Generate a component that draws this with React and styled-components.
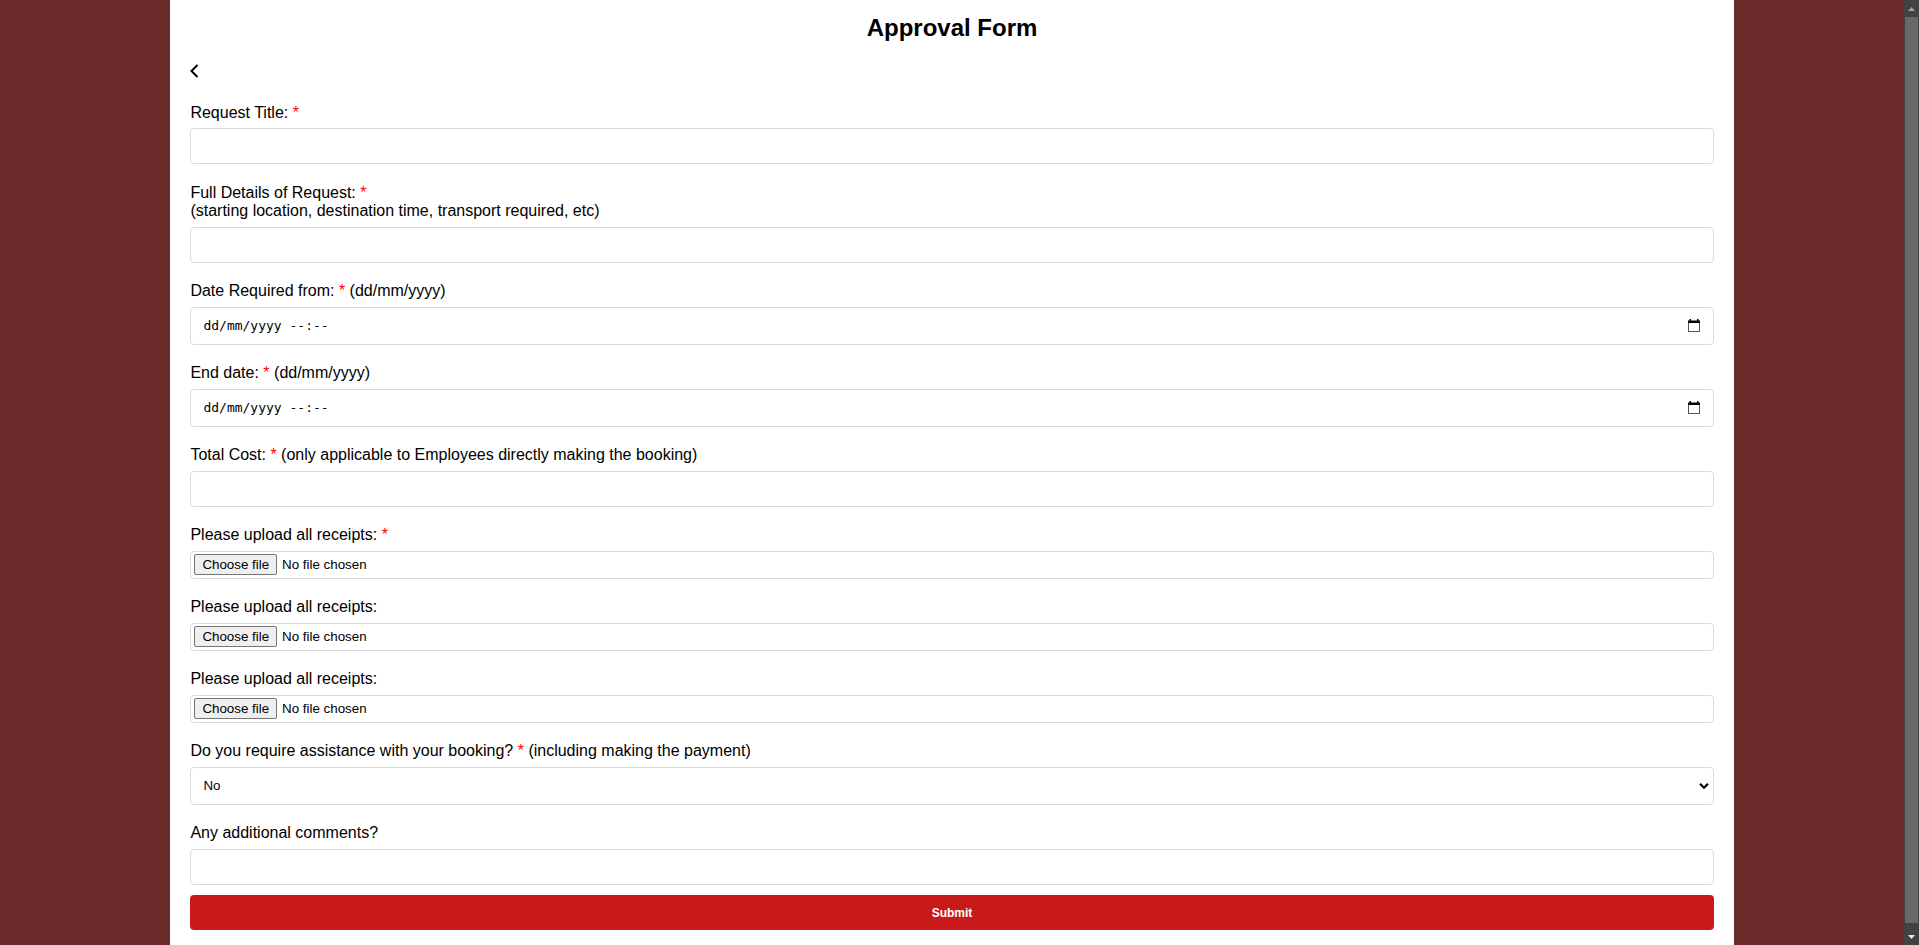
import React from 'react';
import styled, { createGlobalStyle } from 'styled-components';

const GlobalStyle = createGlobalStyle`
  html { background: #6b2b2d; }
  body {
    margin: 0;
    background: #6b2b2d;
    font-family: "Liberation Sans", Arial, sans-serif;
  }
`;

const Page = styled.div`
  display: flex;
  align-items: flex-start;
  min-height: 100vh;
`;

const Viewport = styled.div`
  flex: 1;
  min-width: 0;
`;

const Scrollbar = styled.div`
  position: sticky;
  top: 0;
  flex: 0 0 15px;
  height: 100vh;
  display: flex;
  flex-direction: column;
  background: #424242;
`;

const ScrollArrow = styled.div`
  flex: 0 0 17px;
  display: flex;
  align-items: center;
  justify-content: center;
`;

const ScrollThumb = styled.div`
  flex: 1;
  margin: 0 1px 5px;
  background: #686868;
`;

const Panel = styled.main`
  box-sizing: content-box;
  width: 80%;
  margin: 0 auto;
  padding: 0 20px 20px;
  background: #fff;
  color: #000;
`;

const Title = styled.h2`
  margin: 0;
  padding-top: 14px;
  font-size: 24px;
  line-height: 28px;
  font-weight: bold;
  text-align: center;
`;

const BackButton = styled.button`
  display: block;
  margin: 21px 0 0;
  padding: 0;
  border: 0;
  background: none;
  width: 10px;
  height: 16px;
  cursor: pointer;
  svg { display: block; }
`;

const Form = styled.form`
  margin-top: 25px;
`;

const Field = styled.div`
  margin-bottom: ${p => (p.$last ? '10.6px' : '19.6px')};
`;

const Label = styled.label`
  display: block;
  font-size: 16px;
  line-height: 18.4px;
  margin-bottom: 6px;
`;

const Required = styled.span`
  color: #ff0000;
`;

const boxBase = `
  box-sizing: border-box;
  width: 100%;
  border: 1px solid #dadada;
  border-radius: 4px;
  background: #fff;
`;

const TextInput = styled.input`
  ${boxBase}
  display: block;
  height: 36px;
  padding: 0 12px;
  font: 16px "Liberation Sans", Arial, sans-serif;
  color: #000;
  outline: none;
`;

const DateBox = styled.div`
  ${boxBase}
  display: flex;
  align-items: center;
  justify-content: space-between;
  height: 38px;
  padding: 0 13px 0 12px;
`;

const DateText = styled.span`
  font: 13px "DejaVu Sans Mono", "Liberation Mono", monospace;
  color: #000;
`;

const FileBox = styled.div`
  ${boxBase}
  display: flex;
  align-items: center;
  gap: 5px;
  height: 28px;
  padding: 0 3px;
  font: 13.33px "Liberation Sans", Arial, sans-serif;
`;

const FileButton = styled.button`
  box-sizing: border-box;
  height: 21px;
  padding: 0 7px;
  border: 1px solid #767676;
  border-radius: 2px;
  background: #efefef;
  color: #000;
  font: 13.33px "Liberation Sans", Arial, sans-serif;
`;

const FileText = styled.span`
  color: #000;
`;

const SelectWrap = styled.div`
  position: relative;
`;

const Select = styled.select`
  ${boxBase}
  display: block;
  appearance: none;
  height: 38px;
  padding: 0 20px 0 12px;
  font: 13.33px "Liberation Sans", Arial, sans-serif;
  color: #000;
  outline: none;
`;

const SelectArrow = styled.svg`
  position: absolute;
  right: 5px;
  top: 50%;
  transform: translateY(-50%);
  pointer-events: none;
`;

const SubmitButton = styled.button`
  display: block;
  box-sizing: border-box;
  width: 100%;
  height: 35px;
  border: 0;
  border-radius: 4px;
  background: #c81a1a;
  color: #fff;
  font: bold 12px "Liberation Sans", Arial, sans-serif;
  cursor: pointer;
`;

const CalendarIcon = () => (
  <svg width="12" height="13" viewBox="0 0 12 13">
    <rect x="0.5" y="3.5" width="11" height="9" fill="none" stroke="#555" strokeWidth="1" />
    <rect x="0" y="1.5" width="12" height="2.5" fill="#000" />
    <rect x="1.5" y="0" width="1.5" height="2" fill="#000" />
    <rect x="9" y="0" width="1.5" height="2" fill="#000" />
  </svg>
);

const DateField = ({ label, hint }) => (
  <Field>
    <Label>
      {label} <Required>*</Required> {hint}
    </Label>
    <DateBox>
      <DateText>dd/mm/yyyy --:--</DateText>
      <CalendarIcon />
    </DateBox>
  </Field>
);

const FileField = ({ required }) => (
  <Field>
    <Label>
      Please upload all receipts: {required && <Required>*</Required>}
    </Label>
    <FileBox>
      <FileButton type="button">Choose file</FileButton>
      <FileText>No file chosen</FileText>
    </FileBox>
  </Field>
);

export default function App() {
  return (
    <>
      <GlobalStyle />
      <Page>
        <Viewport>
          <Panel>
            <Title>Approval Form</Title>
            <BackButton type="button" aria-label="Back">
              <svg width="10" height="16" viewBox="0 0 10 16">
                <path d="M7.5 2 L1.5 8 L7.5 14" fill="none" stroke="#000" strokeWidth="2" />
              </svg>
            </BackButton>
            <Form onSubmit={e => e.preventDefault()}>
              <Field>
                <Label>
                  Request Title: <Required>*</Required>
                </Label>
                <TextInput type="text" />
              </Field>
              <Field>
                <Label>
                  Full Details of Request: <Required>*</Required>
                  <br />
                  (starting location, destination time, transport required, etc)
                </Label>
                <TextInput type="text" />
              </Field>
              <DateField label="Date Required from:" hint="(dd/mm/yyyy)" />
              <DateField label="End date:" hint="(dd/mm/yyyy)" />
              <Field>
                <Label>
                  Total Cost: <Required>*</Required> (only applicable to Employees directly making the booking)
                </Label>
                <TextInput type="text" />
              </Field>
              <FileField required />
              <FileField />
              <FileField />
              <Field>
                <Label>
                  Do you require assistance with your booking? <Required>*</Required> (including making the payment)
                </Label>
                <SelectWrap>
                  <Select defaultValue="No">
                    <option value="No">No</option>
                    <option value="Yes">Yes</option>
                  </Select>
                  <SelectArrow width="10" height="7" viewBox="0 0 10 7">
                    <path d="M1 1.2 L5 5.2 L9 1.2" fill="none" stroke="#000" strokeWidth="2.2" />
                  </SelectArrow>
                </SelectWrap>
              </Field>
              <Field $last>
                <Label>Any additional comments?</Label>
                <TextInput type="text" />
              </Field>
              <SubmitButton type="submit">Submit</SubmitButton>
            </Form>
          </Panel>
        </Viewport>
        <Scrollbar aria-hidden="true">
          <ScrollArrow>
            <svg width="7" height="4" viewBox="0 0 7 4">
              <path d="M0 4 L3.5 0 L7 4 Z" fill="#a3a3a3" />
            </svg>
          </ScrollArrow>
          <ScrollThumb />
          <ScrollArrow>
            <svg width="7" height="4" viewBox="0 0 7 4">
              <path d="M0 0 L3.5 4 L7 0 Z" fill="#e8e8e8" />
            </svg>
          </ScrollArrow>
        </Scrollbar>
      </Page>
    </>
  );
}
